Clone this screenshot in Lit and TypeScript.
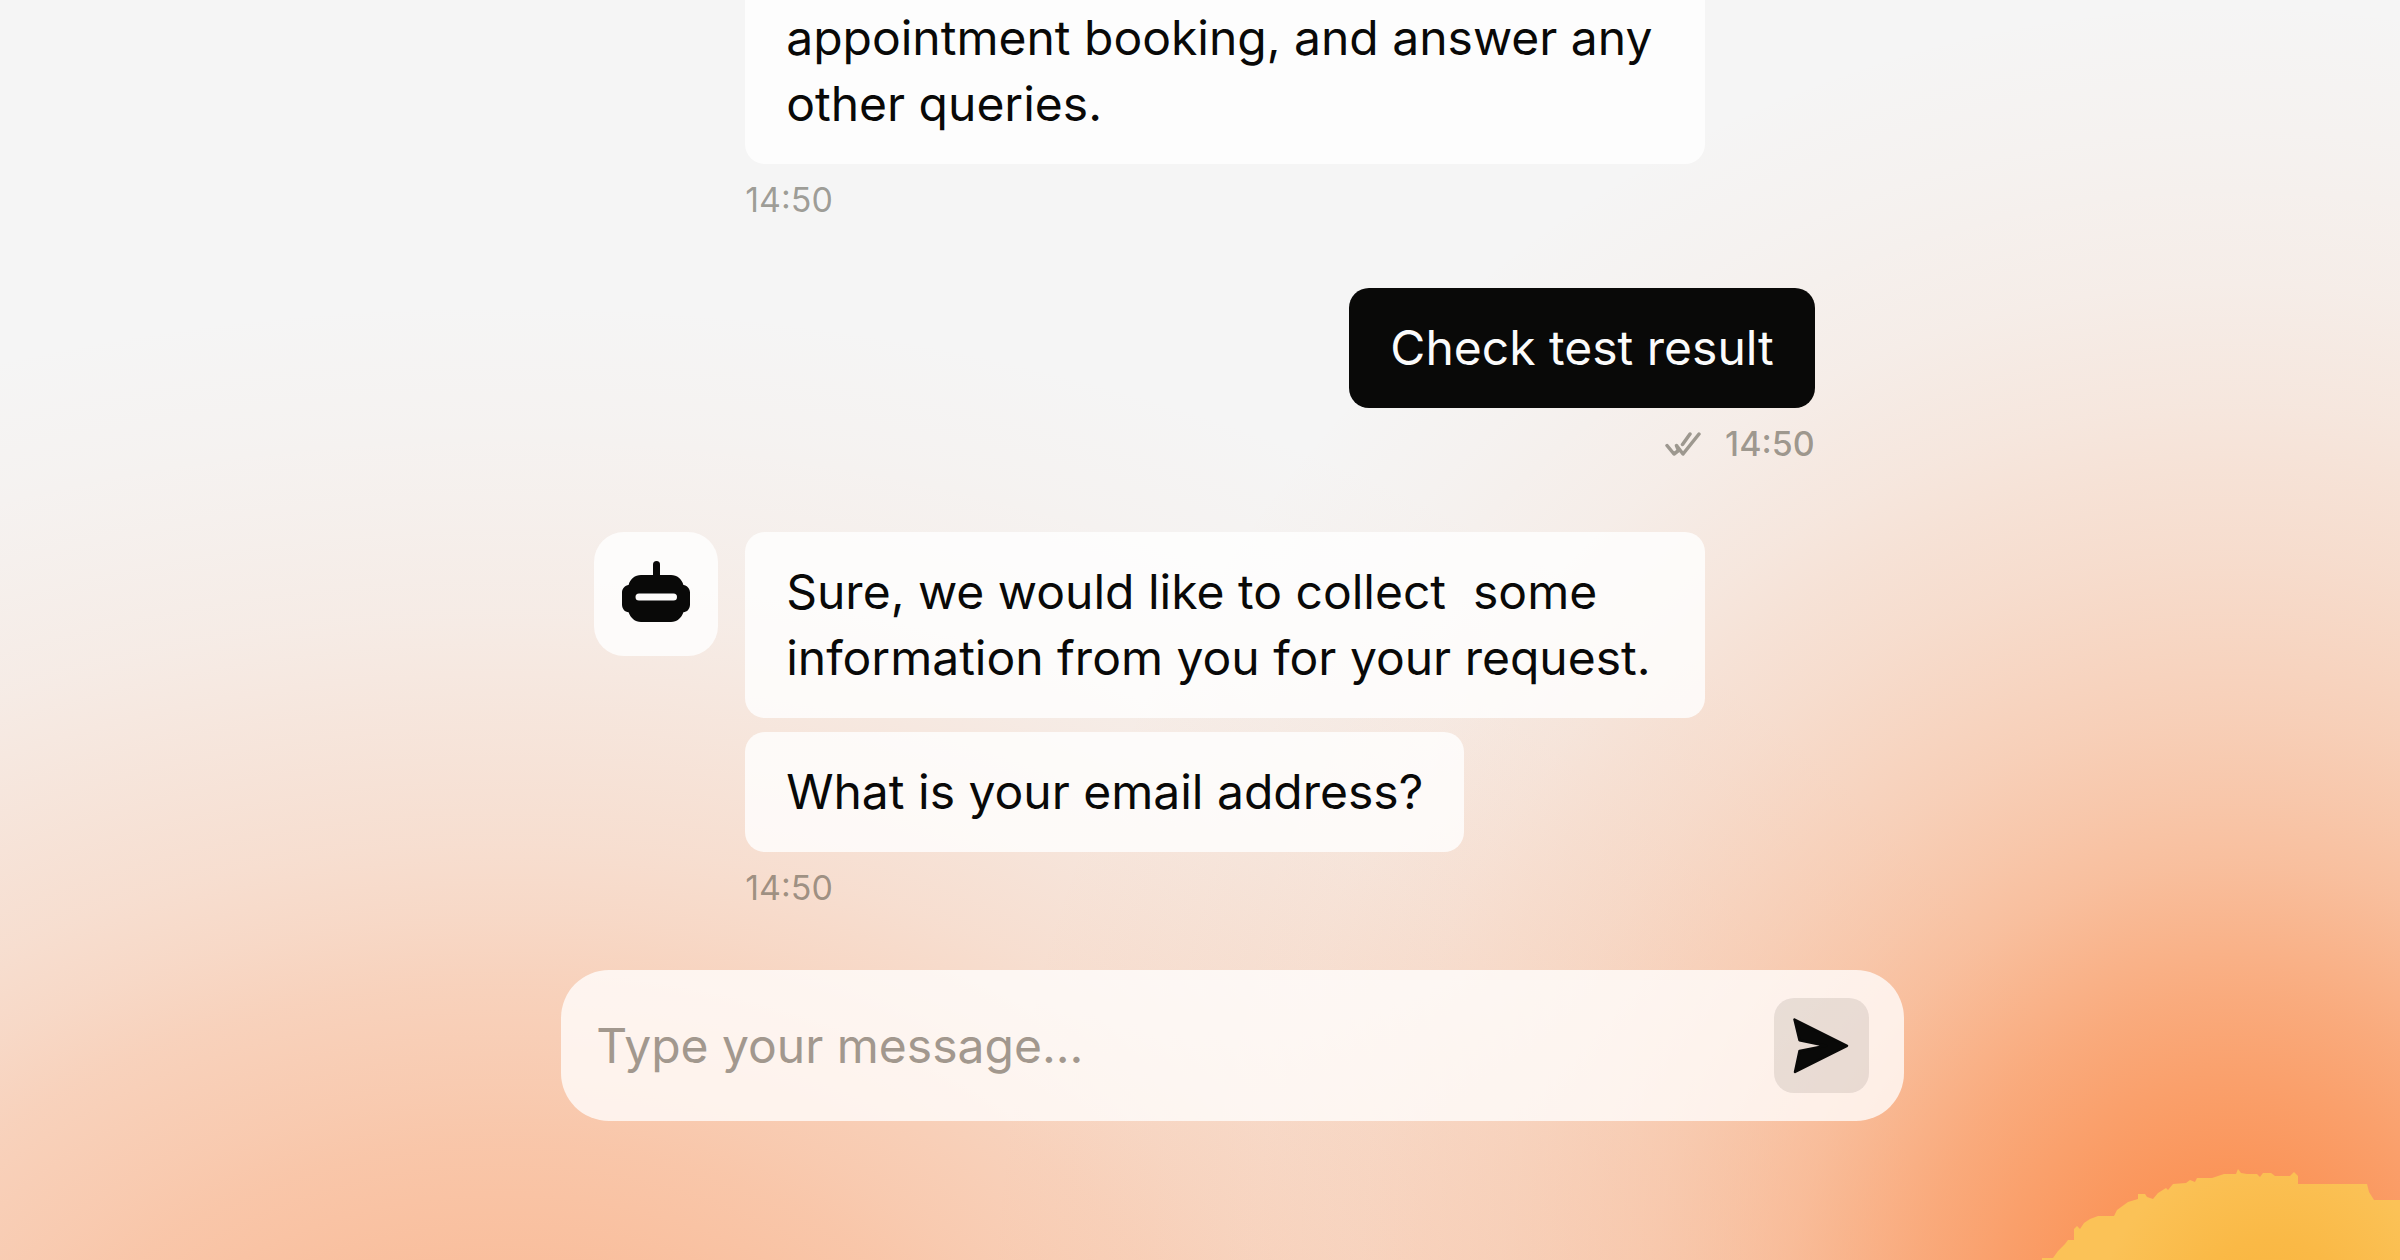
import { LitElement, html, css, svg, nothing } from "lit";
import { customElement, property } from "lit/decorators.js";

const robotIcon = svg`
  <svg class="robot" viewBox="0 0 68 62" width="68" height="62" aria-hidden="true">
    <rect x="31" y="0" width="7" height="20" rx="3.5" fill="#090908"></rect>
    <path fill="#090908" fill-rule="evenodd" d="M19 14H49C55 14 60 18 61.400 24C65 24.500 68 27.500 68 31.500V43.500C68 48 65 51 61.400 51.300C59.500 57 55 61 49 61H19C13 61 8.500 57 6.600 51.300C3 51 0 48 0 43.500V31.500C0 27.500 3 24.500 6.600 24C8 18 13 14 19 14ZM17 32.500A3.500 3.500 0 0 0 17 39.500H51.500A3.500 3.500 0 0 0 51.500 32.500Z"></path>
  </svg>`;

const readIcon = svg`
  <svg viewBox="0 0 36 24" width="36" height="24" role="img" aria-label="Read"
    fill="none" stroke="currentColor" stroke-width="3.500" stroke-linecap="round" stroke-linejoin="round">
    <path d="M2 13.500L9 22L13.500 18.500L11.500 13.500L18 22L34 2M17.500 12.500L25 2"></path>
  </svg>`;

const sendIcon = svg`
  <svg viewBox="0 0 56 56" width="56" height="56" aria-hidden="true">
    <path d="M1.500 1.500L54 27.800L2 54L6.500 33L33 27.800L6.500 22.300Z" fill="#090908"
      stroke="#090908" stroke-width="2.500" stroke-linejoin="round"></path>
  </svg>`;

@customElement("chat-message")
export class ChatMessage extends LitElement {
  @property({ attribute: false }) lines: string[] = [];
  @property() time = "";
  @property({ type: Boolean, reflect: true }) own = false;
  @property({ type: Boolean, reflect: true }) continued = false;

  static styles = css`
    :host {
      display: grid;
      grid-template-columns: 124px minmax(0, 1fr);
      column-gap: 27px;
    }
    :host([own]) {
      display: block;
    }
    .avatar {
      display: flex;
      align-items: center;
      justify-content: center;
      height: 124px;
      padding-bottom: 4px;
      box-sizing: border-box;
      border-radius: 30px;
      background: rgba(255, 255, 255, 0.8);
    }
    .stack {
      grid-column: 2;
      display: flex;
      flex-direction: column;
      align-items: flex-start;
      gap: 14px;
    }
    :host([own]) .stack {
      align-items: flex-end;
    }
    .bubble {
      margin: 0;
      max-width: 960px;
      box-sizing: border-box;
      padding: 27px 41px;
      border-radius: 20px;
      font-size: 48px;
      line-height: 66px;
      color: #090908;
      background: rgba(255, 255, 255, 0.8);
      white-space: pre-wrap;
    }
    .bubble.long {
      width: 100%;
    }
    :host([continued]) .bubble {
      padding-top: 5px;
      border-top-left-radius: 0;
      border-top-right-radius: 0;
    }
    :host([own]) .bubble {
      color: #fbfbfb;
      background: #090908;
    }
    .meta {
      grid-column: 2;
      display: flex;
      align-items: center;
      gap: 24px;
      margin-top: 14px;
      font-size: 34px;
      line-height: 44px;
      color: rgba(60, 58, 45, 0.48);
    }
    :host([own]) .meta {
      justify-content: flex-end;
      font-weight: 500;
    }
  `;

  render() {
    return html`
      ${this.own || this.continued ? nothing : html`<div class="avatar">${robotIcon}</div>`}
      <div class="stack">
        ${this.lines.map(
          (line) => html`<p class="bubble ${line.length > 30 ? "long" : ""}">${line}</p>`
        )}
      </div>
      <div class="meta">${this.own ? readIcon : nothing}<time>${this.time}</time></div>
    `;
  }
}

@customElement("app-root")
export class AppRoot extends LitElement {
  static styles = css`
    :host {
      display: block;
      font-family: Inter, "Liberation Sans", sans-serif;
    }
    .page {
      position: relative;
      overflow: hidden;
      min-height: 100vh;
      box-sizing: border-box;
      padding-left: 65px;
      display: flex;
      justify-content: center;
      background:
        radial-gradient(ellipse 52% 107% at 93% 107%,
          rgb(251 143 80 / 1) 8%, rgb(251 143 80 / 0.94) 13%, rgb(251 143 80 / 0.83) 20%,
          rgb(251 143 80 / 0.73) 26%, rgb(251 143 80 / 0.65) 30%, rgb(251 143 80 / 0.53) 36%,
          rgb(251 143 80 / 0.45) 41%, rgb(251 143 80 / 0.37) 47%, rgb(251 143 80 / 0.3) 53%,
          rgb(251 143 80 / 0.24) 59%, rgb(251 143 80 / 0.19) 65%, rgb(251 143 80 / 0.14) 70%,
          rgb(251 143 80 / 0.08) 79%, rgb(251 143 80 / 0.03) 90%, rgb(251 143 80 / 0) 100%),
        radial-gradient(ellipse 70% 95% at 21% 119%,
          rgb(250 182 143 / 0.94) 14%, rgb(250 182 143 / 0.86) 20%, rgb(250 182 143 / 0.8) 25%,
          rgb(250 182 143 / 0.74) 30%, rgb(250 182 143 / 0.68) 34%, rgb(250 182 143 / 0.56) 43%,
          rgb(250 182 143 / 0.45) 49%, rgb(250 182 143 / 0.36) 55%, rgb(250 182 143 / 0.24) 66%,
          rgb(250 182 143 / 0.15) 74%, rgb(250 182 143 / 0.09) 82%, rgb(250 182 143 / 0.04) 90%,
          rgb(250 182 143 / 0) 100%),
        #f5f5f5;
    }
    .sun {
      position: absolute;
      right: 0;
      bottom: 0;
    }
    .chat {
      position: relative;
      width: 57.500%;
      display: flex;
      flex-direction: column;
    }
    .messages {
      display: flex;
      flex-direction: column;
      gap: 66px;
      padding: 0 89px 0 33px;
    }
    .composer {
      display: flex;
      align-items: center;
      gap: 24px;
      margin-top: 60px;
      padding: 28px 35px;
      border-radius: 48px;
      background: rgba(255, 255, 255, 0.76);
    }
    .field {
      flex: 1;
      min-width: 0;
      height: 66px;
      padding: 0;
      border: 0;
      outline: 0;
      background: transparent;
      font: inherit;
      font-size: 48px;
      color: #090908;
    }
    .field::placeholder {
      color: #a2988e;
      opacity: 1;
    }
    .send {
      display: flex;
      align-items: center;
      justify-content: center;
      width: 95px;
      height: 95px;
      padding: 0;
      border: 0;
      border-radius: 20px;
      background: rgba(20, 10, 0, 0.09);
      cursor: pointer;
    }
  `;

  private onSubmit(event: Event) {
    event.preventDefault();
  }

  render() {
    return html`
      <main class="page">
        <svg class="sun" viewBox="0 0 360 92" width="360" height="92" aria-hidden="true">
          <defs>
            <radialGradient id="sun-fill" gradientUnits="userSpaceOnUse" cx="230" cy="160" r="220">
              <stop offset="0" stop-color="#f9b43c"></stop>
              <stop offset="0.400" stop-color="#fab946"></stop>
              <stop offset="0.800" stop-color="#fbc257"></stop>
            </radialGradient>
          </defs>
          <path fill="url(#sun-fill)" d="M2 92V90H13L18 83L25 76L28 72H34V61L37 58L40 61L44 55L50 51L58 48H74L77 42L88 34L98 31V26H105L107 29L113 31L118 25L126 20L128 22L133 16L146 15L150 12L155 14L157 10H172L184 6H196L198 1L201 5L207 6H217L220 9L223 5H231L235 8H250L254 4L258 8V16H327L329 24L334 32H360V92Z"></path>
        </svg>
        <section class="chat" aria-label="Chat">
          <div class="messages">
            <chat-message
              continued
              time="14:50"
              .lines=${["appointment booking, and answer any other queries."]}
            ></chat-message>
            <chat-message own time="14:50" .lines=${["Check test result"]}></chat-message>
            <chat-message
              time="14:50"
              .lines=${[
                "Sure, we would like to collect  some information from you for your request.",
                "What is your email address?",
              ]}
            ></chat-message>
          </div>
          <form class="composer" @submit=${this.onSubmit}>
            <input class="field" type="text" placeholder="Type your message..." aria-label="Message" />
            <button class="send" type="submit" aria-label="Send message">${sendIcon}</button>
          </form>
        </section>
      </main>
    `;
  }
}
